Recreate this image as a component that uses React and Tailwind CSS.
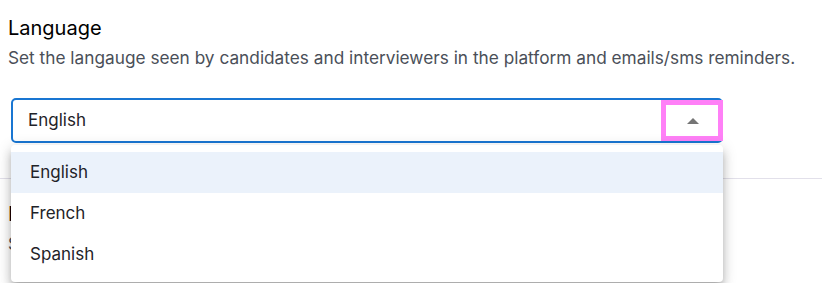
import React from 'react';

const options = ['English', 'French', 'Spanish'];

const LanguageSettings = () => {
  return (
    <div className="relative w-[822px] h-[283px] overflow-hidden bg-white font-['Inter',sans-serif]">
      {/* Language section */}
      <div className="px-2 pt-[15px]">
        <h2 className="text-[20px] leading-[26px] text-black">Language</h2>
        <p className="mt-[5px] text-[17.25px] leading-[24px] text-[#4a4f58]">
          Set the langauge seen by candidates and interviewers in the platform and emails/sms reminders.
        </p>

        <div className="relative z-10 mt-[28px] ml-[3px] w-[712px]">
          <div className="flex h-[45px] items-center justify-between rounded-[5px] border-2 border-[#1976d2] bg-white pl-[15px] pr-[18px] text-[17px] text-[#1f2328]">
            <span>English</span>
            <svg width="12" height="6" viewBox="0 0 12 6" className="mr-[4px]">
              <path d="M0 6 L6 0 L12 6 Z" fill="#757575" />
            </svg>
          </div>

          {/* annotation box round the toggle */}
          <div className="absolute top-[2px] right-0 h-[41px] w-[62px] border-[5px] border-[#ff80f7]" />

          {/* open menu */}
          <ul className="absolute top-[47px] left-0 w-full rounded-[4px] bg-white py-[7px] shadow-[0_5px_6px_-3px_rgba(0,0,0,0.2),0_8px_10px_1px_rgba(0,0,0,0.14),0_3px_14px_2px_rgba(0,0,0,0.12)]">
            {options.map((opt, i) => (
              <li
                key={opt}
                className={`flex h-[41px] items-center pl-[19px] text-[17px] text-[#1f2328] ${
                  i === 0 ? 'bg-[#ebf2fb]' : ''
                }`}
              >
                {opt}
              </li>
            ))}
          </ul>
        </div>
      </div>

      {/* next section, mostly hidden under the menu */}
      <div className="mt-[35px] border-t border-[#e2e0ea]" />
      <div className="px-2 pt-[22px]">
        <h2 className="text-[20px] leading-[26px] text-black">Interviews</h2>
        <p className="mt-[5px] text-[17px] leading-[24px] text-[#4a4f58]">Set reminders.</p>
      </div>
    </div>
  );
};

export default LanguageSettings;
